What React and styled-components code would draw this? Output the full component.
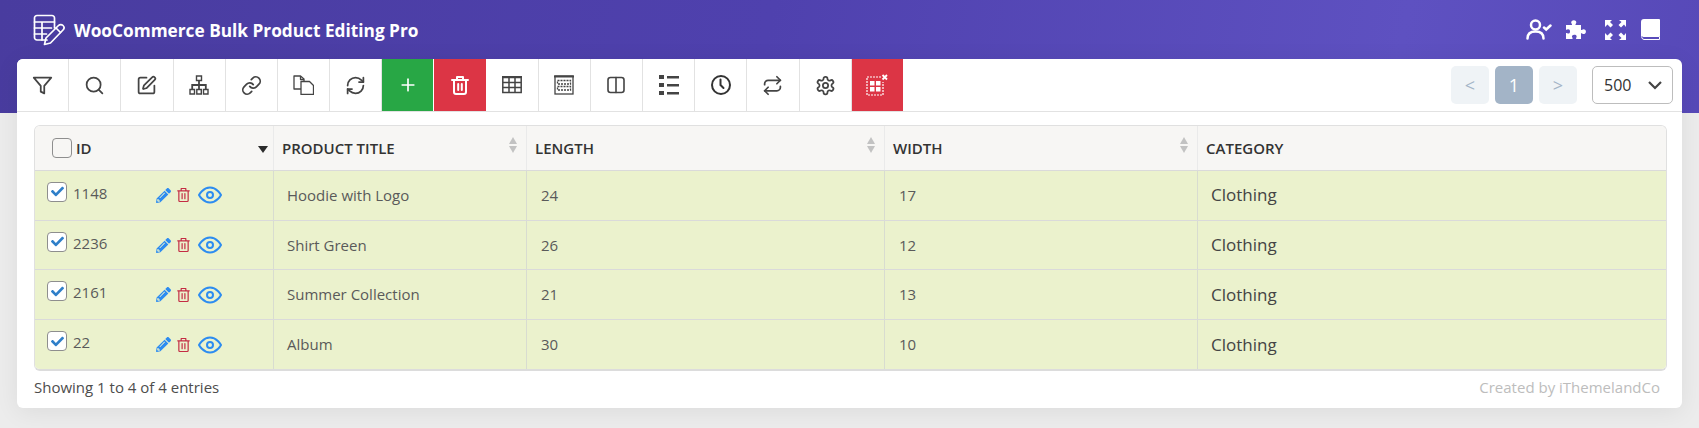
import React from 'react'
import styled, { createGlobalStyle } from 'styled-components'
import { LuFilter, LuSearch, LuLink, LuPlus, LuSettings, LuRepeat, LuRefreshCw, LuSquarePen } from 'react-icons/lu'
import { FaPencilAlt, FaCheck } from 'react-icons/fa'

const Global = createGlobalStyle`
  * { box-sizing: border-box; }
  html, body { margin: 0; padding: 0; background: #ececec; }
  body { font-family: "Open Sans", "Liberation Sans", sans-serif; color: #444; }
`

const Page = styled.div`
  position: relative;
  height: 428px;
  overflow: hidden;
`

const Banner = styled.header`
  height: 113px;
  padding: 14px 17px 0 33px;
  background: linear-gradient(100deg, #493c9f 0%, #4f41ae 45%, #5e51c1 82%, #5749b8 100%);
  display: flex;
  align-items: flex-start;
  justify-content: space-between;
`

const Brand = styled.div`
  display: flex;
  align-items: center;
  gap: 8px;
  color: #fff;
  font-size: 17.25px;
  font-weight: 700;
  height: 32px;
`

const BannerIcons = styled.div`
  display: flex;
  align-items: center;
  padding: 5px 22px 0 0;
  color: #fff;
`

const BannerIcon = styled.span`
  display: flex;
  margin-left: ${p => p.$gap || 0}px;
`

const Panel = styled.main`
  margin: -54px 17px 0;
  height: 349px;
  background: #fff;
  border-radius: 6px;
  box-shadow: 0 4px 24px rgba(0, 0, 0, 0.07);
  position: relative;
`

const Toolbar = styled.div`
  height: 53px;
  display: flex;
  align-items: stretch;
  justify-content: space-between;
  border-bottom: 1px solid #e2e2e2;
`

const ToolGroup = styled.div`
  display: flex;
`

const Tool = styled.button`
  width: 52.18px;
  padding: 0;
  border: 0;
  border-right: 1px solid ${p => (p.$bg ? '#fff' : '#e2e2e2')};
  background: ${p => p.$bg || '#fff'};
  color: ${p => (p.$bg ? '#fff' : '#444')};
  display: flex;
  align-items: center;
  justify-content: center;
  &:first-child { border-top-left-radius: 6px; }
`

const Pager = styled.div`
  display: flex;
  align-items: center;
  gap: 6px;
  padding-right: 9px;
`

const PageBtn = styled.div`
  width: 38px;
  height: 38px;
  border-radius: 5px;
  background: ${p => (p.$active ? '#a3b4c7' : '#eff3f6')};
  color: ${p => (p.$active ? '#fff' : '#a3b4c7')};
  display: flex;
  align-items: center;
  justify-content: center;
  font-size: 18px;
`

const PerPage = styled.div`
  width: 81px;
  height: 38px;
  margin-left: 9px;
  border: 1px solid #bdbdbd;
  border-radius: 5px;
  padding: 0 10px 0 11px;
  display: flex;
  align-items: center;
  justify-content: space-between;
  font-size: 16px;
  color: #333;
`

const TableWrap = styled.div`
  margin: 13px 15px 0 17px;
  border: 1px solid #e0e0e0;
  border-bottom: 2px solid #dcdcdc;
  border-radius: 6px;
  overflow: hidden;
`

const Row = styled.div`
  display: grid;
  grid-template-columns: 239px 253px 358px 313px 1fr;
  height: ${p => (p.$head ? '45px' : '49.7px')};
  background: ${p => (p.$head ? '#f7f6f4' : '#ebf2cd')};
  border-bottom: 1px solid #dadada;
  &:last-child { border-bottom: 0; height: 48.9px; }
`

const HeadCell = styled.div`
  position: relative;
  display: flex;
  align-items: center;
  padding: 0 8px;
  border-right: 1px solid #eaeaea;
  font-size: 15px;
  font-weight: 600;
  color: #333;
  &:last-child { border-right: 0; }
`

const IdHead = styled(HeadCell)`
  padding-left: 17px;
`

const Cell = styled.div`
  display: flex;
  align-items: center;
  padding: 0 14px 1px;
  border-right: 1px solid #d8dcd0;
  font-size: ${p => (p.$large ? '17px' : '15px')};
  color: ${p => (p.$large ? '#444' : '#5a5a5a')};
  &:last-child { border-right: 0; padding-left: 13px; }
`

const TitleCell = styled(Cell)`
  padding-left: 13px;
`

const IdCell = styled(Cell)`
  padding: 0 0 5px 12px;
`

const Box = styled.span`
  flex: none;
  width: 20px;
  height: 20px;
  border: 1px solid #8e8e8e;
  border-radius: 4px;
  background: ${p => (p.$empty ? 'transparent' : '#fff')};
  margin-right: ${p => (p.$empty ? '4px' : '0')};
  margin-top: ${p => (p.$empty ? '0' : '-2px')};
  color: #2f7fc9;
  display: flex;
  align-items: center;
  justify-content: center;
`

const IdText = styled.span`
  margin-left: 6px;
  width: 83px;
`

const Actions = styled.span`
  display: flex;
  align-items: center;
  gap: 6px;
  margin-top: 5px;
`

const EyeSlot = styled.span`
  display: flex;
  margin-left: 2px;
`

const Sort = styled.span`
  position: absolute;
  right: 9px;
  top: 11px;
  display: flex;
  flex-direction: column;
  gap: 2px;
  &::before, &::after {
    content: "";
    border-left: 4px solid transparent;
    border-right: 4px solid transparent;
  }
  &::before { border-bottom: 7px solid #c2c2c2; }
  &::after { border-top: 7px solid #c2c2c2; }
`

const SortDown = styled.span`
  position: absolute;
  right: 5px;
  top: 20px;
  border-left: 5px solid transparent;
  border-right: 5px solid transparent;
  border-top: 7px solid #2b2b2b;
`

const Footer = styled.div`
  display: flex;
  justify-content: space-between;
  align-items: center;
  margin: 6px 22px 0 17px;
  font-size: 15px;
  color: #4d4d4d;
`

const Credit = styled.span`
  color: #bdbdbd;
`

const sw = { fill: 'none', stroke: 'currentColor', strokeWidth: 1.6, strokeLinecap: 'round', strokeLinejoin: 'round' }

const TableLogo = () => (
  <svg width="33" height="32" viewBox="0 0 33 32" {...sw} strokeWidth="1.7">
    <path d="M14 26H4a2.500 2.500 0 0 1-2.500-2.500V4A2.500 2.500 0 0 1 4 1.500h15A2.500 2.500 0 0 1 21.500 4v10" />
    <path d="M1.500 8h20M1.500 14h17M1.500 20h12M9 8v18" />
    <path d="M11.500 30.500l1.500-6.500 12.500-12.500a2.800 2.800 0 0 1 4.500 4.500L17.500 29z" />
    <path d="M23 14l4.500 4.500" />
  </svg>
)

const TrashFat = () => (
  <svg width="18" height="19" viewBox="0 0 18 19" fill="none" stroke="currentColor" strokeWidth="2" strokeLinecap="round" strokeLinejoin="round">
    <path d="M1 4h16M6 3.500V1h6v2.500M3 4.500V16a2 2 0 0 0 2 2h8a2 2 0 0 0 2-2V4.500" />
    <path d="M7.200 8v6M10.800 8v6" />
  </svg>
)

const TrashSmall = () => (
  <svg width="13" height="16" viewBox="0 0 14 16" fill="none" stroke="#c42c44" strokeWidth="1.300" strokeLinecap="round" strokeLinejoin="round">
    <path d="M.8 3.500h12.400M4.500 3.300V1h5v2.300M2 3.700V14a1 1 0 0 0 1 1h8a1 1 0 0 0 1-1V3.700" />
    <path d="M5.500 6.500v5.500M8.500 6.500v5.500" />
  </svg>
)

const Eye = () => (
  <svg width="24" height="24" viewBox="0 0 24 24" fill="none" stroke="#2d8cf0" strokeWidth="2">
    <path d="M1 12s4-7.500 11-7.500S23 12 23 12s-4 7.500-11 7.500S1 12 1 12z" />
    <circle cx="12" cy="12" r="3" />
  </svg>
)

const Hierarchy = () => (
  <svg width="20" height="20" viewBox="0 0 20 20" fill="none" stroke="#444" strokeWidth="1.400">
    <path d="M7.500 1h5v4.500h-5zM1 14.500h4.500V19H1zM7.800 14.500h4.500V19H7.800zM14.500 14.500H19V19h-4.500z" />
    <path d="M10 5.500v9M3.200 14.500V10h13.600v4.500" strokeWidth="1.800" />
  </svg>
)

const Copy = () => (
  <svg width="21" height="20" viewBox="0 0 21 20" fill="none" stroke="#444" strokeWidth="1.300" strokeLinejoin="round">
    <path d="M8 14H1V1h6.500L11 4v2.500" />
    <path d="M7.500 1v3.500H11" />
    <path d="M8 6.500h8.500l4 4v9H8z" />
  </svg>
)

const GridIcon = () => (
  <svg width="20" height="18" viewBox="0 0 20 18" fill="none" stroke="#444" strokeWidth="1.500">
    <path d="M.8 1.500h18.400v15H.8zM.8 6.500h18.400M.8 11.500h18.400M7 2v14M13 2v14" />
    <path d="M0 1h20" strokeWidth="2" />
  </svg>
)

const DashGrid = () => (
  <svg width="20" height="20" viewBox="0 0 20 20" fill="none" stroke="#444" strokeWidth="1.300">
    <rect x="1" y="1" width="18" height="18" />
    <path d="M0 1.500h20" strokeWidth="2" />
    <path d="M3.500 5.500h13v3.500h-13zM3.500 11.500h13v3.500h-13z" strokeDasharray="2 1" />
  </svg>
)

const Columns = () => (
  <svg width="18" height="18" viewBox="0 0 18 18" {...sw}>
    <rect x="1" y="1.500" width="16" height="15" rx="2.500" />
    <path d="M9 1.500v15" />
  </svg>
)

const ListIcon = () => (
  <svg width="20" height="20" viewBox="0 0 20 20" fill="#444">
    <path d="M0 0h5v4H0zM0 8h5v4H0zM0 16h5v4H0zM8 1h12v2.500H8zM8 9h12v2.500H8zM8 17h12v2.500H8z" />
  </svg>
)

const Clock = () => (
  <svg width="20" height="20" viewBox="0 0 20 20" fill="none" stroke="#333" strokeWidth="2" strokeLinecap="round">
    <circle cx="10" cy="10" r="9" />
    <path d="M9.500 4.500V10l3 3" />
  </svg>
)

const ClearGrid = () => (
  <svg width="22" height="22" viewBox="0 0 22 22" fill="none" stroke="#fff">
    <path d="M15 3H1v18h16V8" strokeDasharray="2 1" strokeWidth="1.200" />
    <path d="M4 7h4.500v4.500H4zM10 7h4.500v4.500H10zM4 13h4.500v4.500H4zM10 13h4.500v4.500H10z" fill="#fff" stroke="none" />
    <path d="M16.500 1l4.500 4.500M21 1l-4.500 4.500" strokeWidth="1.800" />
  </svg>
)

const UserCheck = () => (
  <svg width="26" height="21" viewBox="0 0 26 21" fill="none" stroke="#fff" strokeWidth="2.500" strokeLinecap="round">
    <circle cx="9.500" cy="6" r="4.500" />
    <path d="M1.500 19.500c0-4.500 3-7 8-7s8 2.500 8 7" />
    <path d="M18 8.500l2.200 2 4.300-4" />
  </svg>
)

const Puzzle = () => (
  <svg width="22" height="20" viewBox="0 0 22 20" fill="#fff">
    <path d="M1 5h5.500c.8 0 .6-.8.2-1.300C6 3 6 1.800 6.800 1 7.800 0 10 0 10.800 1c.7.800.7 2 0 2.700-.4.500-.6 1.300.2 1.300H16v4.500c0 .8.700.6 1.200.2.800-.7 2-.7 2.900.1 1.100 1 1.100 2.800 0 3.700-.9.800-2.100.8-2.900.1-.5-.4-1.200-.6-1.200.2V19H11.500c-.8 0-.5-.9-.1-1.400.5-.8.300-1.900-.6-2.500-1-.6-2.800-.5-3.500.4-.5.700-.4 1.500 0 2.100.4.500.6 1.400-.2 1.400H1v-5.500c0-.8.800-.6 1.300-.2.700.5 1.700.4 2.300-.4.600-.9.600-2.400-.1-3.200-.6-.7-1.600-.7-2.200-.2-.5.400-1.300.6-1.300-.2z" />
  </svg>
)

const Expand = () => (
  <svg width="21" height="20" viewBox="0 0 21 20" fill="#fff">
    <path d="M0 0h7L5 2l3 3-2.500 2.500-3-3L0 7zM21 0v7l-2-2.500-3 3L13.500 5l3-3-2.500-2zM0 20v-7l2.500 2.500 3-3L8 15l-3 3 2 2zM21 20h-7l2.500-2-3-3 2.500-2.500 3 3L21 13z" />
  </svg>
)

const Book = () => (
  <svg width="19" height="21" viewBox="0 0 19 21">
    <path d="M3 0h15a1 1 0 0 1 1 1v16H3a3 3 0 0 0-3 1V3a3 3 0 0 1 3-3z" fill="#fff" />
    <path d="M.8 18.500A2 2 0 0 1 3 17.500h15.500v3H3a2.500 2.500 0 0 1-2.200-2z" fill="none" stroke="#fff" strokeWidth="1" />
  </svg>
)

const tools = [
  { el: <LuFilter size={21} /> },
  { el: <LuSearch size={21} /> },
  { el: <LuSquarePen size={21} /> },
  { el: <Hierarchy /> },
  { el: <LuLink size={21} /> },
  { el: <Copy /> },
  { el: <LuRefreshCw size={21} /> },
  { el: <LuPlus size={20} />, bg: '#28a745' },
  { el: <TrashFat />, bg: '#dc3545' },
  { el: <GridIcon /> },
  { el: <DashGrid /> },
  { el: <Columns /> },
  { el: <ListIcon /> },
  { el: <Clock /> },
  { el: <LuRepeat size={21} /> },
  { el: <LuSettings size={21} /> },
  { el: <ClearGrid />, bg: '#dc3545' },
]

const products = [
  { id: 1148, title: 'Hoodie with Logo', length: 24, width: 17 },
  { id: 2236, title: 'Shirt Green', length: 26, width: 12 },
  { id: 2161, title: 'Summer Collection', length: 21, width: 13 },
  { id: 22, title: 'Album', length: 30, width: 10 },
]

export default function App () {
  return (
    <Page>
      <Global />
      <Banner>
        <Brand>
          <TableLogo />
          WooCommerce Bulk Product Editing Pro
        </Brand>
        <BannerIcons>
          <BannerIcon><UserCheck /></BannerIcon>
          <BannerIcon $gap={13}><Puzzle /></BannerIcon>
          <BannerIcon $gap={18}><Expand /></BannerIcon>
          <BannerIcon $gap={15}><Book /></BannerIcon>
        </BannerIcons>
      </Banner>
      <Panel>
        <Toolbar>
          <ToolGroup>
            {tools.map((t, i) => <Tool key={i} $bg={t.bg}>{t.el}</Tool>)}
          </ToolGroup>
          <Pager>
            <PageBtn>&lt;</PageBtn>
            <PageBtn $active>1</PageBtn>
            <PageBtn>&gt;</PageBtn>
            <PerPage>
              500
              <svg width="14" height="9" viewBox="0 0 14 9" fill="none" stroke="#444" strokeWidth="2.200"><path d="M1 1l6 6 6-6" /></svg>
            </PerPage>
          </Pager>
        </Toolbar>
        <TableWrap>
          <Row $head>
            <IdHead>
              <Box $empty />
              ID
              <SortDown />
            </IdHead>
            <HeadCell>PRODUCT TITLE<Sort /></HeadCell>
            <HeadCell>LENGTH<Sort /></HeadCell>
            <HeadCell>WIDTH<Sort /></HeadCell>
            <HeadCell>CATEGORY</HeadCell>
          </Row>
          {products.map(p => (
            <Row key={p.id}>
              <IdCell>
                <Box><FaCheck size={13} /></Box>
                <IdText>{p.id}</IdText>
                <Actions>
                  <FaPencilAlt size={15} color="#2d8cf0" />
                  <TrashSmall />
                  <EyeSlot><Eye /></EyeSlot>
                </Actions>
              </IdCell>
              <TitleCell>{p.title}</TitleCell>
              <Cell>{p.length}</Cell>
              <Cell>{p.width}</Cell>
              <Cell $large>Clothing</Cell>
            </Row>
          ))}
        </TableWrap>
        <Footer>
          <span>Showing 1 to 4 of 4 entries</span>
          <Credit>Created by iThemelandCo</Credit>
        </Footer>
      </Panel>
    </Page>
  )
}
